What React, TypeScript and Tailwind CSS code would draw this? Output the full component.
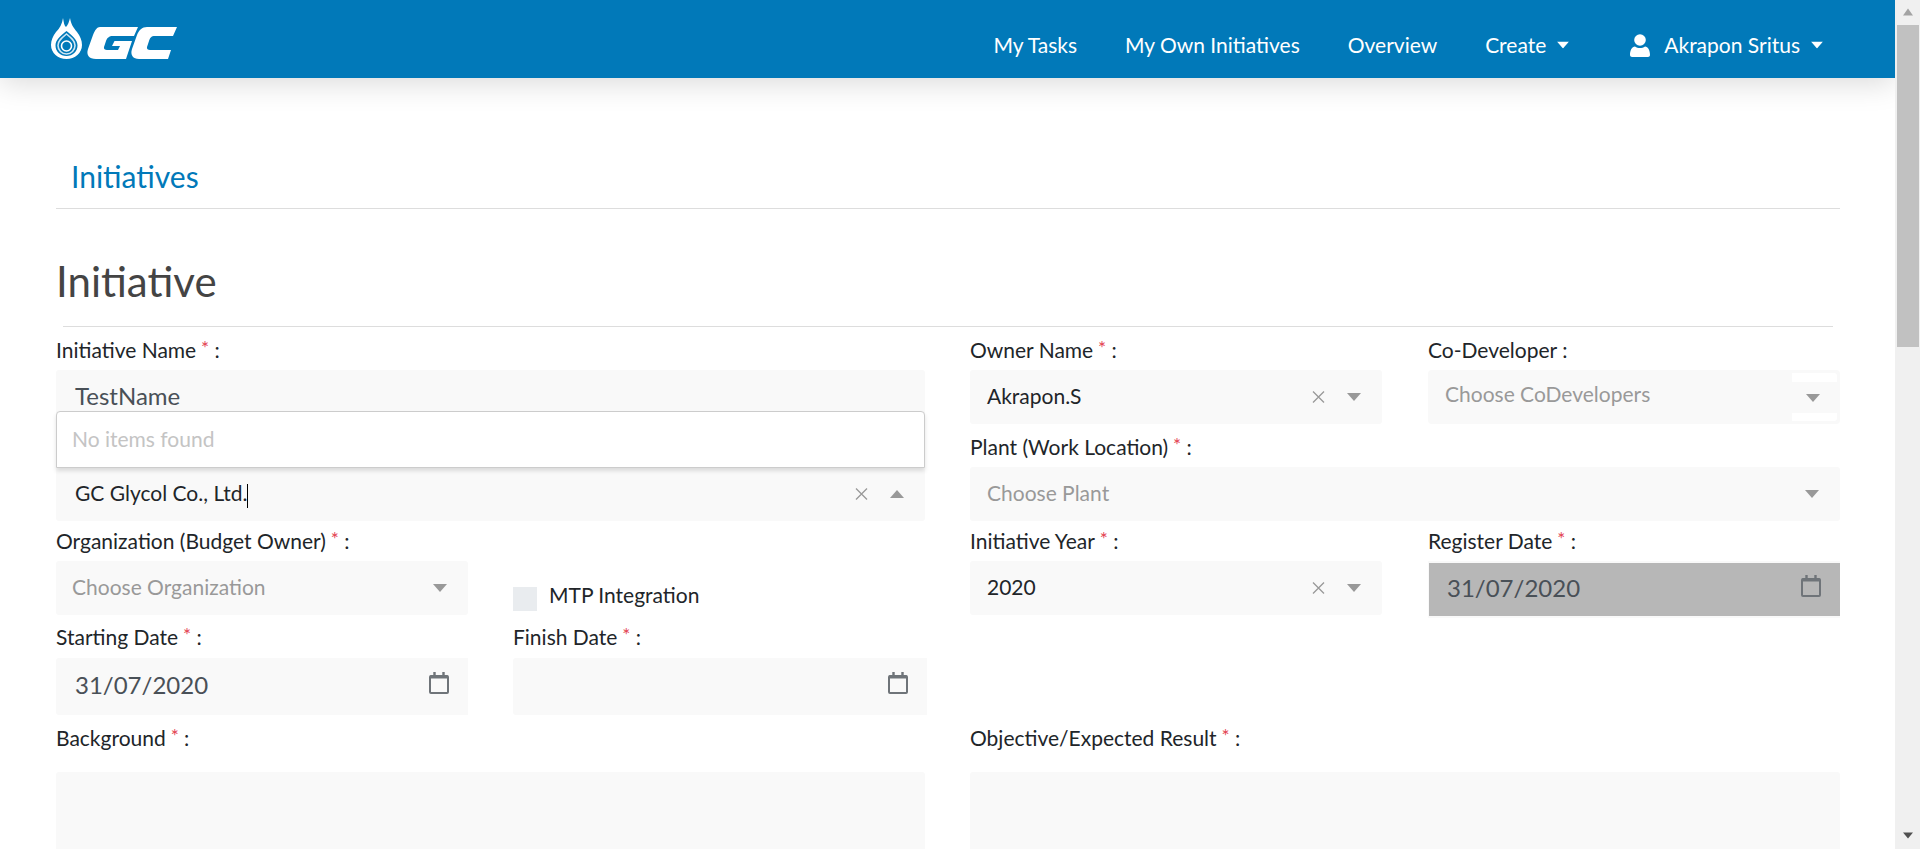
import { ReactNode } from 'react';

function Caret({ up = false, className = 'text-[#999999]' }: { up?: boolean; className?: string }) {
  return (
    <svg width="14" height="8" viewBox="0 0 14 8" className={`shrink-0 fill-current ${up ? 'rotate-180' : ''} ${className}`}>
      <path d="M0 0h14L7 8z" />
    </svg>
  );
}

function ClearX() {
  return (
    <svg width="13" height="12" viewBox="0 0 13 12" className="shrink-0 stroke-[#999999] fill-none">
      <path d="M1 .5 12 11.500M12 .5 1 11.500" strokeWidth="1.300" />
    </svg>
  );
}

function CalendarIcon() {
  return (
    <svg width="20" height="22" viewBox="0 0 20 22" className="shrink-0 -mt-[8px] fill-none stroke-[#6f7479]">
      <rect x="1" y="4" width="18" height="17" rx="1" strokeWidth="2" />
      <path d="M1 5h18" strokeWidth="3" />
      <path d="M5.500 0v4M14.500 0v4" strokeWidth="2.400" />
    </svg>
  );
}

function Logo() {
  return (
    <svg width="130" height="44" viewBox="49 17 130 44" className="shrink-0">
      <path
        fill="#fff"
        d="M63 18c1 5 1 7 3 9 2-2 3-5 4-9 1 6 3 9 7 14 3 4 5 8 5 13 0 8-7 14-15.500 14S51 53 51 45c0-5 2-9 5-13 4-4 6-8 7-14z"
      />
      <path fill="#0179b9" d="M66.500 31c-6 5-11 9-11 14.500 0 6 5 10.500 11 10.500s11-4.500 11-10.500c0-5.500-5-9.500-11-14.500z" />
      <path fill="none" stroke="#cfe6f3" strokeWidth="1.600" d="M66.500 34c-5 4-8.500 7-8.500 11.500s3.800 8.500 8.500 8.500 8.500-4 8.500-8.500S71.500 38 66.500 34z" />
      <circle cx="66.500" cy="46" r="5" fill="#0179b9" stroke="#fff" strokeWidth="1.600" />
      <path
        fill="#fff"
        d="M100 27h38l-4 9h-21c-4 0-6 2-7 5l-2 6c-.5 2 1 3 3 3h11l2-4h-8l2.500-5H132l-6 18H96c-7 0-10-4-8-10l5-14c2-5 4-8 7-8z"
      />
      <path
        fill="#fff"
        d="M147 27h30l-4 9h-18c-4 0-5 2-6 5l-2 6c-.5 2 1 3 3 3h21l-3 9h-29c-6 0-9-4-7-10l5-14c2-5 5-8 10-8z"
      />
    </svg>
  );
}

function Label({ text, required = true, className = '' }: { text: string; required?: boolean; className?: string }) {
  return (
    <div className={`flex text-[21px] leading-none text-[#212529] ${className}`}>
      <span>
        {text}
        {required && <span className="text-[#e3414f] text-[19px] relative -top-[3px]"> *</span>} :
      </span>
    </div>
  );
}

function Box({ children, className = 'h-[54px]' }: { children?: ReactNode; className?: string }) {
  return <div className={`flex items-center bg-[#f9f9f9] rounded-[3px] ${className}`}>{children}</div>;
}

function SelectBox({ value, placeholder, clearable = false, up = false, cursor = false, inset = 'pl-[17px]' }: { value?: string; placeholder?: string; clearable?: boolean; up?: boolean; cursor?: boolean; inset?: string }) {
  return (
    <Box>
      <span className={`flex-1 pb-[2px] text-[21px] ${inset} ${value ? 'text-[#212529]' : 'text-[#999999]'}`}>
        {value ?? placeholder}
        {cursor && <span className="inline-block w-px h-[24px] bg-black align-middle" />}
      </span>
      {clearable && <ClearX />}
      <span className={`w-[50px] flex justify-center pr-[6px] ${clearable ? 'ml-[7px]' : ''}`}>
        <Caret up={up} />
      </span>
    </Box>
  );
}

function DateBox({ value }: { value?: string }) {
  return (
    <div className="flex items-center h-[57px] bg-[#f9f9f9] rounded-l-[3px] pl-[19px] pr-[19px] justify-between">
      <span className="pb-[3px] text-[24px] text-[#495057]">{value}</span>
      <CalendarIcon />
    </div>
  );
}

export default function App() {
  return (
    <div className="flex h-[849px] overflow-hidden bg-white font-['Lato','Liberation_Sans',sans-serif]">
      <div className="w-[1895px] shrink-0 overflow-hidden">
        {/* Navbar */}
        <header className="relative z-20 flex items-center justify-between h-[78px] bg-[#0179b9] pl-[49px] pr-[71px] shadow-[0_5px_30px_rgba(0,0,0,0.15)]">
          <Logo />
          <nav className="flex items-center pt-[12px] text-[21px] text-white">
            <a className="mr-[48px]">My Tasks</a>
            <a className="mr-[48px]">My Own Initiatives</a>
            <a className="mr-[48px]">Overview</a>
            <a className="flex items-center mr-[60px]">
              Create
              <Caret className="text-white ml-[10px] scale-[0.86]" />
            </a>
            <svg width="20" height="23" viewBox="0 0 20 23" className="fill-white mr-[14px]">
              <circle cx="10" cy="6" r="5.800" />
              <path d="M0 21c0-5 2-8 5-8.500 3 2 7 2 10 0 3 .5 5 3.500 5 8.500 0 1-1 2-2 2H2c-1 0-2-1-2-2z" />
            </svg>
            <a className="flex items-center">
              Akrapon Sritus
              <Caret className="text-white ml-[10px] scale-[0.86]" />
            </a>
          </nav>
        </header>

        <main className="pl-[56px] w-[1840px]">
          <div className="flex items-end h-[131px] border-b border-[#dddddd]">
            <h2 className="pl-[15px] pb-[14px] text-[30px] leading-[36px] text-[#0179b9]">Initiatives</h2>
          </div>

          <div className="flex items-start pt-[51px] h-[118px] relative">
            <h1 className="text-[42px] leading-none text-[#444444]">Initiative</h1>
            <div className="absolute left-[7px] right-[7px] bottom-0 border-b border-[#dddddd]" />
          </div>

          <div className="grid grid-cols-[869px_870px] gap-x-[45px]">
            {/* Left column */}
            <div className="flex flex-col">
              <Label text="Initiative Name" className="h-[43px] pt-[12px]" />
              <div className="relative">
                <div className="flex items-center h-[97px] bg-[#f9f9f9] rounded-t-[3px] pl-[19px] pb-[45px] text-[24px] text-[#495057]">
                  TestName
                </div>
                <SelectBox value="GC Glycol Co., Ltd." cursor clearable up inset="pl-[19px]" />
                {/* Dropdown panel */}
                <div className="absolute left-0 right-0 top-[41px] h-[57px] flex items-center pl-[15px] pb-[2px] bg-white border border-[#cccccc] rounded-t-[4px] shadow-[0_3px_4px_rgba(0,0,0,0.12)] text-[21px] text-[#c4c4c4]">
                  No items found
                </div>
              </div>

              <div className="grid grid-cols-[412px_414px] gap-x-[45px]">
                <div>
                  <Label text="Organization (Budget Owner)" className="h-[40px] pb-[2px] items-center" />
                  <SelectBox placeholder="Choose Organization" inset="pl-[16px]" />
                </div>
                <div className="flex items-center gap-[12px] pt-[61px]">
                  <span className="w-[24px] h-[24px] bg-[#e9ecef]" />
                  <span className="text-[21px] text-[#212529] -mt-[7px]">MTP Integration</span>
                </div>
                <div>
                  <Label text="Starting Date" className="h-[43px] items-center" />
                  <DateBox value="31/07/2020" />
                </div>
                <div>
                  <Label text="Finish Date" className="h-[43px] items-center" />
                  <DateBox />
                </div>
              </div>

              <Label text="Background" className="h-[57px] pt-[12px]" />
              <Box className="h-[200px]" />
            </div>

            {/* Right column */}
            <div className="flex flex-col">
              <div className="grid grid-cols-[412px_412px] gap-x-[46px]">
                <div>
                  <Label text="Owner Name" className="h-[43px] pt-[12px]" />
                  <SelectBox value="Akrapon.S" clearable />
                </div>
                <div>
                  <Label text="Co-Developer" required={false} className="h-[43px] pt-[12px]" />
                  <div className="flex h-[54px] bg-[#f9f9f9] rounded-[4px] p-[3px]">
                    <div className="flex-1 flex items-center pl-[14px] pb-[7px] text-[21px] text-[#999999]">Choose CoDevelopers</div>
                    <div className="w-[45px] flex flex-col justify-between">
                      <div className="h-[9px] bg-white rounded-tr-[3px]" />
                      <div className="flex justify-center pr-[4px]">
                        <Caret />
                      </div>
                      <div className="h-[8px] bg-white rounded-br-[3px]" />
                    </div>
                  </div>
                </div>
              </div>

              <Label text="Plant (Work Location)" className="h-[43px] pt-[1px] items-center" />
              <SelectBox placeholder="Choose Plant" />

              <div className="grid grid-cols-[412px_412px] gap-x-[46px]">
                <div>
                  <Label text="Initiative Year" className="h-[40px] pb-[2px] items-center" />
                  <SelectBox value="2020" clearable />
                </div>
                <div>
                  <Label text="Register Date" className="h-[40px] pb-[2px] items-center" />
                  <div className="bg-[#f9f9f9] pt-[2px] pl-[1px] h-[57px]">
                    <div className="flex items-center justify-between h-[53px] bg-[#b7b7b7] pl-[18px] pr-[19px]">
                      <span className="pb-[3px] text-[24px] text-[#495057]">31/07/2020</span>
                      <CalendarIcon />
                    </div>
                  </div>
                </div>
              </div>

              <Label text="Objective/Expected Result" className="mt-[97px] h-[57px] pt-[12px]" />
              <Box className="h-[200px]" />
            </div>
          </div>
        </main>
      </div>

      {/* Scrollbar */}
      <div className="flex flex-col w-[25px] shrink-0 bg-[#f0f0f0] items-center">
        <svg width="14" height="25" viewBox="0 0 14 25" className="fill-[#a3a3a3]">
          <path d="M2 15.500 7 8.500l5 7z" />
        </svg>
        <div className="w-[22px] h-[322px] bg-[#c1c1c1]" />
        <div className="flex-1" />
        <svg width="14" height="25" viewBox="0 0 14 25" className="fill-[#505050]">
          <path d="M2 8.500h10l-5 6z" />
        </svg>
      </div>
    </div>
  );
}
